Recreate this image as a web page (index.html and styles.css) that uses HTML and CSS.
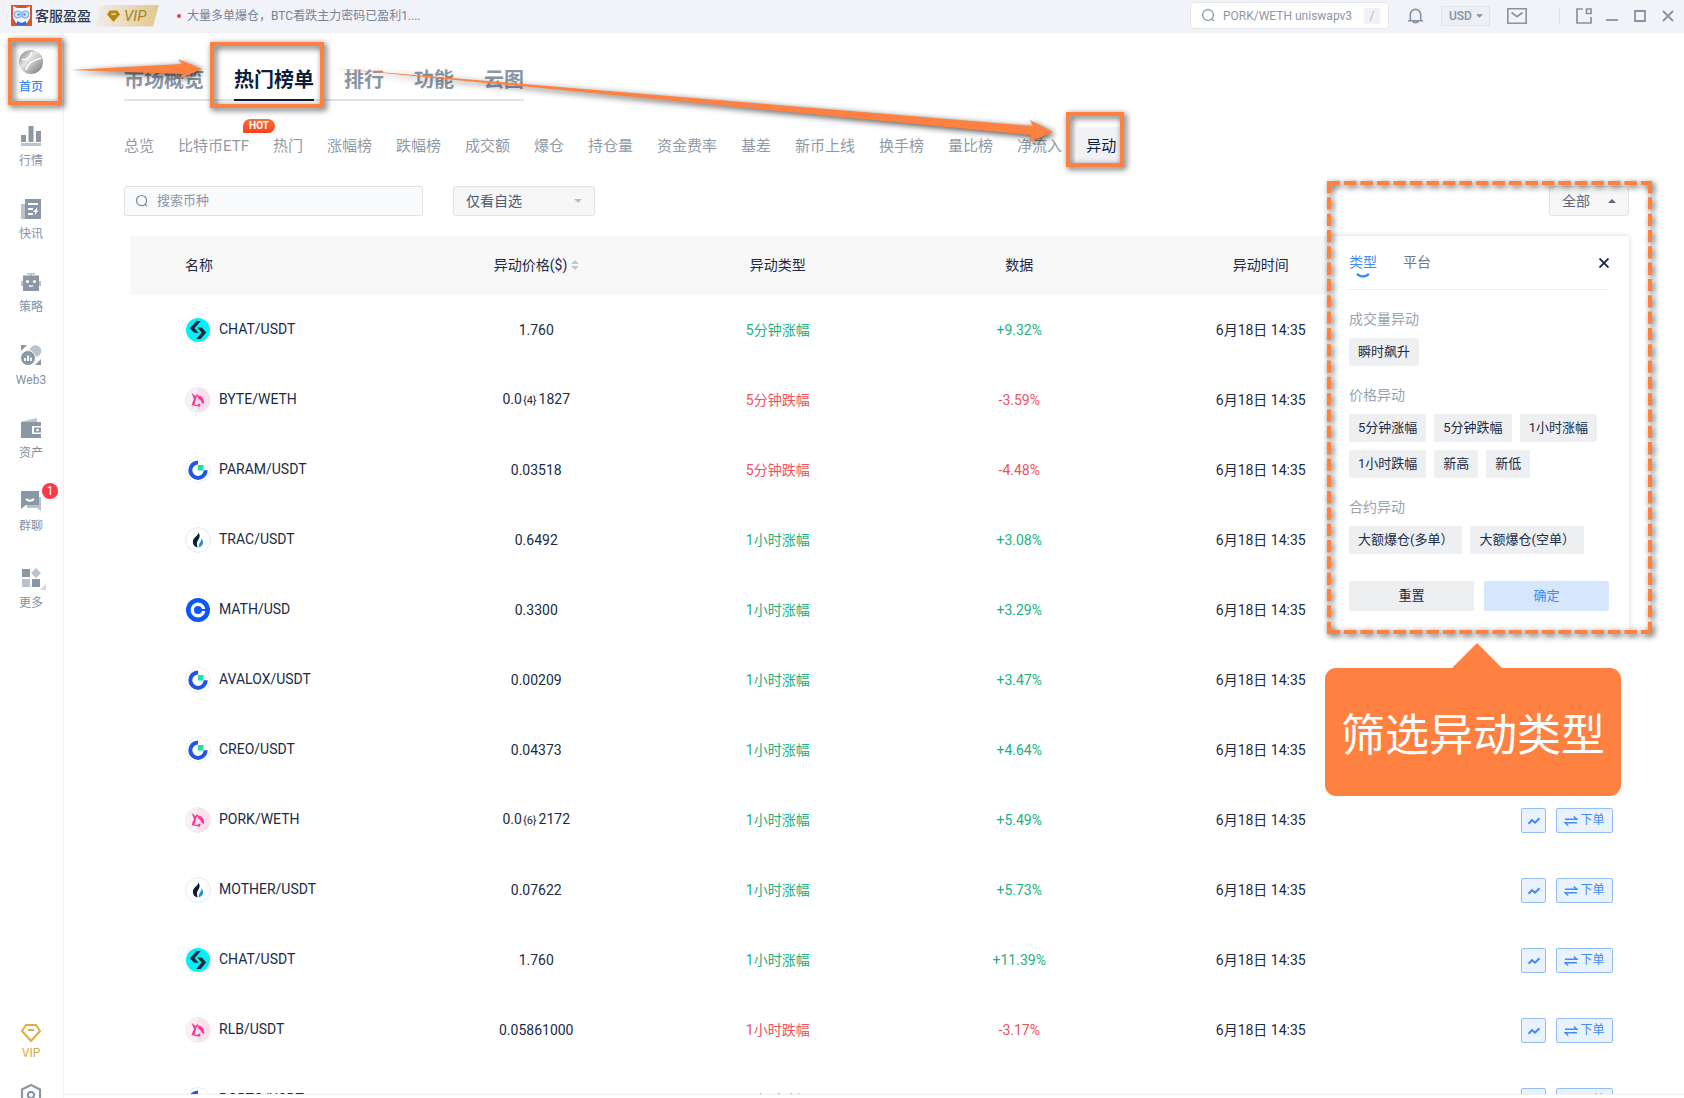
FILE: index.html
```html
<!DOCTYPE html>
<html lang="zh-CN">

<head>
	<meta charset="UTF-8" />
	<meta name="viewport" content="width=device-width, initial-scale=1.0" />
	<title>热门榜单 - 异动</title>
	<link rel="stylesheet" href="styles.css">
</head>

<body>
	<!-- shared icons -->
	<svg class="sprite" aria-hidden="true">
		<symbol id="search" viewBox="0 0 16 16">
			<circle cx="7.5" cy="7.5" r="5.8" fill="none" stroke="currentColor" stroke-width="1.3" />
			<path d="M11.2 11.6 13.8 14" stroke="currentColor" stroke-width="1.3" />
		</symbol>
		<symbol id="bitget" viewBox="0 0 26 26">
			<circle cx="13" cy="13" r="12" fill="#03f0fb" />
			<path d="M11.500 4h4.300L9.500 11.300l4.200 4.500h-4.400L4.800 11.300zM12.300 10.400h4.600L21.200 15.400 15.600 22h-4.300l5.300-6.600z" fill="#1b2a38" />
		</symbol>
		<symbol id="uni" viewBox="0 0 26 26">
			<circle cx="13" cy="13" r="12.400" fill="#fbe0ec" stroke="#ebebef" />
			<path d="M1 13a12 12 0 0 1 12-12c-3 7-4 16 0 24A12 12 0 0 1 1 13z" fill="#f7f1f6" />
			<path d="M6.500 5.800 10.500 9l2-2 1 2-2 1.200-1.300 4.300-.7 3.500-3 .7 1-3.500 1.500-3.200zM13 8.500l3.200.8 2.300 3 .8 4.700-2.600-1.200-1.200-2.600-2.300-1.700zM8.500 17.300l3.500.6 2.300-1.500 1.500 1.300-1.500 2.300-1-.8-3.800-.2z" fill="#f73a97" />
		</symbol>
		<symbol id="gate" viewBox="0 0 26 26">
			<circle cx="13" cy="13" r="12.400" fill="#fff" stroke="#ececf0" />
			<path d="M13 5.500A7.700 7.700 0 1 0 20.700 13.200" fill="none" stroke="#2454e6" stroke-width="4" />
			<path d="M13 8h5.500v5.500H13z" fill="#17e5a1" />
		</symbol>
		<symbol id="huobi" viewBox="0 0 26 26">
			<circle cx="13" cy="13" r="12.400" fill="#fff" stroke="#e8e8ec" />
			<path d="M13.500 5.500c1.800 2.600 1.400 5-.4 7.600-1.500 2.200-1.600 4.600-.3 7.200-4-.6-5.600-4-4.600-7.400.8-2.600 4.600-3.800 5.300-7.400z" fill="#0b1c3d" />
			<path d="M16.500 11.400c2.300 2.800 2.600 6.800-2.300 9-1.400-3.700 2.200-5.400 2.300-9z" fill="#1b94dd" />
		</symbol>
		<symbol id="coinbase" viewBox="0 0 26 26">
			<circle cx="13" cy="13" r="12" fill="#0a56fb" />
			<circle cx="13" cy="13" r="5.700" fill="none" stroke="#fff" stroke-width="3.400" />
			<path d="M14 12h8v2h-8z" fill="#0a56fb" />
		</symbol>
		<symbol id="trend" viewBox="0 0 14 14">
			<path d="M1.500 9.700 5 6.200 8 8.700 12.500 4.200" fill="none" stroke="currentColor" stroke-width="2" />
		</symbol>
		<symbol id="swap" viewBox="0 0 14 14">
			<path d="M1 5.300h12L9.800 2.500M13 8.700H1l3.200 2.800" fill="none" stroke="currentColor" stroke-width="1.400" />
		</symbol>
	</svg>

	<header class="topbar">
		<svg class="logo" viewBox="0 0 21 21">
			<path d="M0 0h21v21H0z" fill="#d9532f" />
			<path d="M2 1l4 2h9l4-2v12l-3 5H5l-3-5z" fill="#f4f8ff" />
			<circle cx="6.800" cy="9.500" r="3.400" fill="#d5e9ff" stroke="#7fb2ee" stroke-width="1.400" />
			<circle cx="14.200" cy="9.500" r="3.400" fill="#d5e9ff" stroke="#7fb2ee" stroke-width="1.400" />
			<circle cx="7.500" cy="9.500" r="1.200" fill="#4a8ae0" />
			<circle cx="13.500" cy="9.500" r="1.200" fill="#4a8ae0" />
			<path d="M6 16l4.500 2 4.500-2v4H6z" fill="#2f6ce0" />
		</svg>
		<span class="user">客服盈盈</span>
		<span class="vip-tag">
			<svg viewBox="0 0 14 14">
				<path d="M3 1h8l3 4.500L7 13.500 0 5.500z" fill="#b8860f" />
				<path d="M4.500 5h5" stroke="#f6e7bb" stroke-width="1.400" />
			</svg>VIP
		</span>
		<a class="news" href="#">大量多单爆仓，BTC看跌主力密码已盈利1....</a>

		<label class="top-search">
			<svg><use href="#search" /></svg>
			<input type="text" placeholder="PORK/WETH uniswapv3" aria-label="搜索">
			<kbd>/</kbd>
		</label>
		<button class="icon-btn bell" aria-label="通知">
			<svg viewBox="0 0 18 18">
				<path d="M1 14h16M3.500 13.500V7.500a5.500 5.500 0 0 1 11 0v6M6 14.500a3.200 2.500 0 0 0 6 0" fill="none" stroke="currentColor" stroke-width="1.700" />
			</svg>
		</button>
		<select class="currency" aria-label="货币">
			<option>USD</option>
			<option>CNY</option>
		</select>
		<button class="icon-btn mail" aria-label="消息">
			<svg viewBox="0 0 20 16">
				<path d="M.8.800h18.400v14.400H.8zM4.500 4.500 10 8.700l5.500-4.200" fill="none" stroke="currentColor" stroke-width="1.600" />
			</svg>
		</button>
		<div class="window-btns">
			<button class="icon-btn" aria-label="弹出">
				<svg viewBox="0 0 16 16">
					<path d="M7 1H1v14h14V9M10.500 1H15v4.500h-4.500z" fill="none" stroke="currentColor" stroke-width="1.700" />
				</svg>
			</button>
			<button class="icon-btn" aria-label="最小化">
				<svg viewBox="0 0 16 16">
					<path d="M2 12h12" stroke="currentColor" stroke-width="1.800" />
				</svg>
			</button>
			<button class="icon-btn" aria-label="最大化">
				<svg viewBox="0 0 16 16">
					<path d="M3 3h10v10H3z" fill="none" stroke="currentColor" stroke-width="1.800" />
				</svg>
			</button>
			<button class="icon-btn" aria-label="关闭">
				<svg viewBox="0 0 16 16">
					<path d="M3 3l10 10M13 3 3 13" stroke="currentColor" stroke-width="1.800" />
				</svg>
			</button>
		</div>
	</header>

	<nav class="sidebar">
		<a class="side-item home active" href="#">
			<svg viewBox="0 0 24 24">
				<defs>
					<linearGradient id="ball" x1="0" y1="0" x2="1" y2="1">
						<stop offset="0" stop-color="#777" />
						<stop offset=".4" stop-color="#e4e4e4" />
						<stop offset=".65" stop-color="#b2b2b2" />
						<stop offset="1" stop-color="#707070" />
					</linearGradient>
				</defs>
				<circle cx="12" cy="12" r="12" fill="url(#ball)" />
				<path d="M3 9c4 3 9-3 10-7M7 20C8 13 14 10 22 8" fill="none" stroke="#fff" stroke-width="1.500" />
			</svg>
			<span>首页</span>
		</a>
		<a class="side-item" href="#">
			<svg viewBox="0 0 24 24">
				<path d="M2 11h5v7H2zM9.500 2h5v16h-5zM17 7h5v11h-5z" fill="#8b97a5" />
				<path d="M2 19h20v3H2z" fill="#bac2cc" />
			</svg>
			<span>行情</span>
		</a>
		<a class="side-item" href="#">
			<svg viewBox="0 0 24 24">
				<path d="M2 7h4v15H2z" fill="#bac2cc" />
				<path d="M6 2h16v20H6z" fill="#8b97a5" />
				<path d="M9 7h10M9 12h5M9 17h5" stroke="#fff" stroke-width="2" />
				<path d="M18.500 10 14 15h2.200l-1 3.500 4.300-5h-2z" fill="#fff" />
			</svg>
			<span>快讯</span>
		</a>
		<a class="side-item" href="#">
			<svg viewBox="0 0 24 24">
				<path d="M8 3h8v1.500h-3V6h-2V4.500H8zM2 11h2v5H2zM20 11h2v5h-2z" fill="#bac2cc" />
				<path d="M4 5.500h16V21H4z" fill="#8b97a5" />
				<circle cx="8.500" cy="11.500" r="1.600" fill="#fff" />
				<circle cx="15.500" cy="11.500" r="1.600" fill="#fff" />
				<path d="M10 15.500q2 1.500 4 0" stroke="#fff" stroke-width="1.500" fill="none" />
			</svg>
			<span>策略</span>
		</a>
		<a class="side-item" href="#">
			<svg viewBox="0 0 24 24">
				<path d="M2 2h6L2 8zM22 16v6h-6z" fill="#8b97a5" />
				<circle cx="16.500" cy="8" r="5.800" fill="#bac2cc" />
				<circle cx="9" cy="15" r="7.500" fill="#8b97a5" stroke="#fff" />
				<path d="M6 15v3M9 12.500V18M12 14.500V18" stroke="#fff" stroke-width="1.800" />
			</svg>
			<span>Web3</span>
		</a>
		<a class="side-item" href="#">
			<svg viewBox="0 0 24 24">
				<path d="M3 5.500 18 2v4H3z" fill="#bac2cc" />
				<path d="M2 6h20v4h-9v8h9v4H2z" fill="#8b97a5" />
				<path d="M15 11.500h7v5h-7z" fill="#8b97a5" />
				<circle cx="18.500" cy="14" r="1.300" fill="#fff" />
			</svg>
			<span>资产</span>
		</a>
		<a class="side-item" href="#">
			<svg viewBox="0 0 24 24">
				<path d="M8 8h14v14l-4-3H8z" fill="#bac2cc" />
				<path d="M2 2h18v14H7l-5 4z" fill="#8b97a5" />
				<path d="M7 10q4 3.500 8 0" stroke="#fff" stroke-width="2" fill="none" />
			</svg>
			<span>群聊</span>
			<b class="badge">1</b>
		</a>
		<a class="side-item more" href="#">
			<svg viewBox="0 0 24 24">
				<path d="M3 3h8v8H3zM13 13h8v8h-8z" fill="#8b97a5" />
				<path d="M3 13h8v8H3zM17 2l5 5-5 5-5-5z" fill="#bac2cc" />
			</svg>
			<span>更多</span>
		</a>
		<a class="side-item side-vip" href="#">
			<svg viewBox="2 2 20 20">
				<path d="M7 4h10l4 6-9 10L3 10z" fill="none" stroke="#dfae3d" stroke-width="2" />
				<path d="M9 9h6" stroke="#dfae3d" stroke-width="2" />
			</svg>
			<span>VIP</span>
		</a>
		<a class="side-item side-set" href="#" aria-label="设置">
			<svg viewBox="0 0 24 24">
				<path d="M12 3 21 7.500V18l-9 5-9-5V7.500z" fill="none" stroke="#8b97a5" stroke-width="2.200" />
				<circle cx="12" cy="13" r="3.200" fill="none" stroke="#8b97a5" stroke-width="2.200" />
			</svg>
		</a>
	</nav>

	<main class="main">
		<nav class="tabs">
			<a href="#">市场概览</a>
			<a class="active" href="#">热门榜单</a>
			<a href="#">排行</a>
			<a href="#">功能</a>
			<a href="#">云图</a>
		</nav>

		<nav class="subtabs">
			<a href="#">总览</a>
			<a href="#">比特币ETF<i class="hot">HOT</i></a>
			<a href="#">热门</a>
			<a href="#">涨幅榜</a>
			<a href="#">跌幅榜</a>
			<a href="#">成交额</a>
			<a href="#">爆仓</a>
			<a href="#">持仓量</a>
			<a href="#">资金费率</a>
			<a href="#">基差</a>
			<a href="#">新币上线</a>
			<a href="#">换手榜</a>
			<a href="#">量比榜</a>
			<a href="#">净流入</a>
			<a class="active" href="#">异动</a>
		</nav>

		<div class="toolbar">
			<label class="coin-search">
				<svg><use href="#search" /></svg>
				<input type="text" placeholder="搜索币种" aria-label="搜索币种">
			</label>
			<select class="own" aria-label="自选">
				<option>仅看自选</option>
				<option>全部币种</option>
			</select>

			<div class="filter">
				<button class="filter-btn" aria-expanded="true">全部</button>
				<div class="panel">
					<div class="panel-head">
						<button class="active">类型
							<svg viewBox="0 0 14 6"><path d="M1 1q6 5 12 0" fill="none" stroke="#3f8cf5" stroke-width="2.400" /></svg>
						</button>
						<button>平台</button>
						<button class="close" aria-label="关闭">
							<svg viewBox="0 0 10 10"><path d="M.500.500l9 9M9.500.500l-9 9" stroke="#14243f" stroke-width="1.800" /></svg>
						</button>
					</div>
					<h4>成交量异动</h4>
					<div class="chips">
						<button>瞬时飙升</button>
					</div>
					<h4>价格异动</h4>
					<div class="chips">
						<button>5分钟涨幅</button>
						<button>5分钟跌幅</button>
						<button>1小时涨幅</button>
						<button>1小时跌幅</button>
						<button>新高</button>
						<button>新低</button>
					</div>
					<h4>合约异动</h4>
					<div class="chips">
						<button>大额爆仓(多单）</button>
						<button>大额爆仓(空单）</button>
					</div>
					<div class="panel-foot">
						<button>重置</button>
						<button class="ok">确定</button>
					</div>
				</div>
				<svg class="dashed" viewBox="0 0 325 453">
					<path d="M0 2h325M0 451h325" stroke-dasharray="12.500 4" stroke-dashoffset="-.4" />
					<path d="M2 0v453M323 0v453" stroke-dasharray="12.300 4.020" />
				</svg>
				<div class="callout">筛选异动类型</div>
			</div>
		</div>

		<table class="list">
			<thead>
				<tr>
					<th class="pad"></th>
					<th class="name">名称</th>
					<th>异动价格($)
						<svg class="sort" viewBox="0 0 8 12"><path d="M4 1l4 4H0zM4 11l4-4H0z" fill="#c3c8ce" /></svg>
					</th>
					<th>异动类型</th>
					<th>数据</th>
					<th>异动时间</th>
					<th></th>
				</tr>
			</thead>
			<tbody>
				<tr class="up">
					<td></td>
					<td class="name"><svg><use href="#bitget" /></svg>CHAT/USDT</td>
					<td>1.760</td>
					<td class="c">5分钟涨幅</td>
					<td class="c">+9.32%</td>
					<td>6月18日 14:35</td>
					<td class="act"><button class="chart" aria-label="走势"><svg><use href="#trend" /></svg></button><button class="order"><svg><use href="#swap" /></svg>下单</button></td>
				</tr>
				<tr class="down">
					<td></td>
					<td class="name"><svg><use href="#uni" /></svg>BYTE/WETH</td>
					<td>0.0<small>{4}</small>1827</td>
					<td class="c">5分钟跌幅</td>
					<td class="c">-3.59%</td>
					<td>6月18日 14:35</td>
					<td class="act"><button class="chart" aria-label="走势"><svg><use href="#trend" /></svg></button><button class="order"><svg><use href="#swap" /></svg>下单</button></td>
				</tr>
				<tr class="down">
					<td></td>
					<td class="name"><svg><use href="#gate" /></svg>PARAM/USDT</td>
					<td>0.03518</td>
					<td class="c">5分钟跌幅</td>
					<td class="c">-4.48%</td>
					<td>6月18日 14:35</td>
					<td class="act"><button class="chart" aria-label="走势"><svg><use href="#trend" /></svg></button><button class="order"><svg><use href="#swap" /></svg>下单</button></td>
				</tr>
				<tr class="up">
					<td></td>
					<td class="name"><svg><use href="#huobi" /></svg>TRAC/USDT</td>
					<td>0.6492</td>
					<td class="c">1小时涨幅</td>
					<td class="c">+3.08%</td>
					<td>6月18日 14:35</td>
					<td class="act"><button class="chart" aria-label="走势"><svg><use href="#trend" /></svg></button><button class="order"><svg><use href="#swap" /></svg>下单</button></td>
				</tr>
				<tr class="up">
					<td></td>
					<td class="name"><svg><use href="#coinbase" /></svg>MATH/USD</td>
					<td>0.3300</td>
					<td class="c">1小时涨幅</td>
					<td class="c">+3.29%</td>
					<td>6月18日 14:35</td>
					<td class="act"><button class="chart" aria-label="走势"><svg><use href="#trend" /></svg></button><button class="order"><svg><use href="#swap" /></svg>下单</button></td>
				</tr>
				<tr class="up">
					<td></td>
					<td class="name"><svg><use href="#gate" /></svg>AVALOX/USDT</td>
					<td>0.00209</td>
					<td class="c">1小时涨幅</td>
					<td class="c">+3.47%</td>
					<td>6月18日 14:35</td>
					<td class="act"><button class="chart" aria-label="走势"><svg><use href="#trend" /></svg></button><button class="order"><svg><use href="#swap" /></svg>下单</button></td>
				</tr>
				<tr class="up">
					<td></td>
					<td class="name"><svg><use href="#gate" /></svg>CREO/USDT</td>
					<td>0.04373</td>
					<td class="c">1小时涨幅</td>
					<td class="c">+4.64%</td>
					<td>6月18日 14:35</td>
					<td class="act"><button class="chart" aria-label="走势"><svg><use href="#trend" /></svg></button><button class="order"><svg><use href="#swap" /></svg>下单</button></td>
				</tr>
				<tr class="up">
					<td></td>
					<td class="name"><svg><use href="#uni" /></svg>PORK/WETH</td>
					<td>0.0<small>{6}</small>2172</td>
					<td class="c">1小时涨幅</td>
					<td class="c">+5.49%</td>
					<td>6月18日 14:35</td>
					<td class="act"><button class="chart" aria-label="走势"><svg><use href="#trend" /></svg></button><button class="order"><svg><use href="#swap" /></svg>下单</button></td>
				</tr>
				<tr class="up">
					<td></td>
					<td class="name"><svg><use href="#huobi" /></svg>MOTHER/USDT</td>
					<td>0.07622</td>
					<td class="c">1小时涨幅</td>
					<td class="c">+5.73%</td>
					<td>6月18日 14:35</td>
					<td class="act"><button class="chart" aria-label="走势"><svg><use href="#trend" /></svg></button><button class="order"><svg><use href="#swap" /></svg>下单</button></td>
				</tr>
				<tr class="up">
					<td></td>
					<td class="name"><svg><use href="#bitget" /></svg>CHAT/USDT</td>
					<td>1.760</td>
					<td class="c">1小时涨幅</td>
					<td class="c">+11.39%</td>
					<td>6月18日 14:35</td>
					<td class="act"><button class="chart" aria-label="走势"><svg><use href="#trend" /></svg></button><button class="order"><svg><use href="#swap" /></svg>下单</button></td>
				</tr>
				<tr class="down">
					<td></td>
					<td class="name"><svg><use href="#uni" /></svg>RLB/USDT</td>
					<td>0.05861000</td>
					<td class="c">1小时跌幅</td>
					<td class="c">-3.17%</td>
					<td>6月18日 14:35</td>
					<td class="act"><button class="chart" aria-label="走势"><svg><use href="#trend" /></svg></button><button class="order"><svg><use href="#swap" /></svg>下单</button></td>
				</tr>
				<tr class="down">
					<td></td>
					<td class="name"><svg><use href="#gate" /></svg>PORTO/USDT</td>
					<td>0.00500</td>
					<td class="c">1小时跌幅</td>
					<td class="c">-3.20%</td>
					<td>6月18日 14:35</td>
					<td class="act"><button class="chart" aria-label="走势"><svg><use href="#trend" /></svg></button><button class="order"><svg><use href="#swap" /></svg>下单</button></td>
				</tr>
			</tbody>
		</table>
	</main>
	<footer class="bottom"></footer>

	<!-- guide arrows between the highlighted steps -->
	<svg class="arrows" aria-hidden="true">
		<path d="M70 70 182 64 178 59 202 69 179 79 183 74z" />
		<path d="M330 68 1033 126 1030 120 1053 132 1029 142 1031 135z" />
	</svg>
</body>

</html>
```

FILE: styles.css
```css
* {
	box-sizing: border-box;
}

body {
	margin: 0;
	height: 100vh;
	display: grid;
	grid-template-columns: 64px 1fr;
	grid-template-rows: 33px 1fr 4px;
	position: relative;
	overflow: hidden;
	font: 14px/20px Roboto, "Noto Sans CJK SC", sans-serif;
	color: #1b2b45;
	background: #fff;
}

a {
	color: inherit;
	text-decoration: none;
}

button,
input,
select {
	font: inherit;
	color: inherit;
	margin: 0;
	padding: 0;
	border: 0;
	background: none;
	outline: none;
}

button {
	cursor: pointer;
}

select {
	appearance: none;
}

.sprite {
	position: absolute;
	width: 0;
	height: 0;
}

/* top bar */
.topbar {
	grid-column: 1 / 3;
	display: flex;
	align-items: center;
	padding: 0 8px 2px 11px;
	background: #f2f3f8;
	color: #8792a2;
}

.logo {
	width: 21px;
	height: 21px;
}

.user {
	margin-left: 3px;
	font-weight: 500;
	color: #2a3850;
}

.vip-tag {
	display: flex;
	align-items: center;
	gap: 4px;
	width: 64px;
	height: 22px;
	margin-left: 4px;
	padding-left: 12px;
	font-size: 15px;
	font-style: italic;
	color: #a98324;
	background: linear-gradient(90deg, #f0eee9, #e0c88e);
	clip-path: polygon(6px 0, 100% 0, 58px 100%, 0 100%);
}

.vip-tag svg {
	width: 13px;
	height: 14px;
}

.news {
	margin-left: 18px;
	font-size: 12px;
	color: #768294;
}

.news::before {
	content: "";
	display: inline-block;
	width: 4px;
	height: 4px;
	margin-right: 6px;
	border-radius: 50%;
	background: #f5364a;
	vertical-align: middle;
}

.top-search {
	display: flex;
	align-items: center;
	width: 199px;
	height: 27px;
	margin-left: auto;
	padding: 0 8px 0 10px;
	border: 1px solid #e4e7eb;
	border-radius: 4px;
	background: #fff;
}

.top-search svg {
	flex: none;
	width: 15px;
	height: 15px;
}

.top-search input {
	flex: 1;
	min-width: 0;
	margin-left: 7px;
	font-size: 12px;
}

.top-search kbd {
	width: 16px;
	height: 16px;
	font: 12px/16px Roboto, sans-serif;
	text-align: center;
	color: #b3b9c1;
	background: #f0f1f2;
	border-radius: 2px;
}

input::placeholder {
	color: #8d97a5;
	opacity: 1;
}

.icon-btn svg {
	display: block;
	width: 16px;
	height: 16px;
}

.bell {
	margin-left: 18px;
}

.bell svg {
	width: 17px;
	height: 18px;
}

.currency {
	width: 49px;
	height: 20px;
	margin-left: 17px;
	padding-left: 7px;
	font-size: 12px;
	font-weight: 500;
	line-height: 16px;
	border: 1px solid #e0e3e8;
	border-radius: 2px;
	background: #eceff3 url("data:image/svg+xml,%3Csvg xmlns='http://www.w3.org/2000/svg' viewBox='0 0 8 4'%3E%3Cpath d='M0 0h8L4 4z' fill='%238792a2'/%3E%3C/svg%3E") no-repeat right 6px center / 7px 4px;
}

.mail {
	margin-left: 17px;
}

.mail svg {
	width: 20px;
}

.window-btns {
	display: flex;
	gap: 12px;
	margin-left: 32px;
	padding-left: 16px;
	border-left: 1px solid #dfe2e7;
}

/* sidebar */
.sidebar {
	grid-row: 2 / 4;
	display: flex;
	flex-direction: column;
	align-items: center;
	min-height: 0;
	padding: 17px 1px 0 0;
	border-right: 1px solid #eff0f2;
}

.side-item {
	flex: none;
	position: relative;
	display: flex;
	flex-direction: column;
	align-items: center;
	gap: 4px;
	width: 54px;
	height: 73px;
	font-size: 12px;
	line-height: 18px;
	color: #8590a0;
}

.side-item svg {
	flex: none;
	width: 24px;
	height: 24px;
}

.side-item.active {
	color: #3f86f0;
	font-weight: 500;
}

.home {
	margin-bottom: 1px;
}

.more {
	margin-top: 4px;
}

.more::after {
	content: "";
	position: absolute;
	top: 18px;
	right: 12px;
	border: solid transparent;
	border-width: 3px;
	border-right-color: #d3d8de;
	border-bottom-color: #d3d8de;
}

.badge {
	position: absolute;
	top: -6px;
	right: 0;
	width: 16px;
	height: 16px;
	border-radius: 50%;
	font-size: 12px;
	font-weight: 400;
	line-height: 16px;
	text-align: center;
	color: #fff;
	background: #ff3848;
}

.side-vip {
	height: 59px;
	margin-top: auto;
	line-height: 12px;
	color: #dca64e;
}

.side-vip svg {
	width: 20px;
	height: 20px;
}

.side-set {
	height: 16px;
}

/* highlighted steps */
.home::after,
.tabs .active::before,
.subtabs .active::after {
	content: "";
	position: absolute;
	z-index: 3;
	border: 4px solid #ff8141;
	filter: drop-shadow(2px 2px 3px rgba(0, 0, 0, 0.7));
	pointer-events: none;
}

.home::after {
	inset: -12px -4px 18px 4px;
}

.arrows {
	position: absolute;
	top: 0;
	left: 0;
	width: 1100px;
	height: 180px;
	fill: #ff8141;
	filter: drop-shadow(2px 2px 3px rgba(0, 0, 0, 0.7));
	pointer-events: none;
	z-index: 4;
}

/* content */
.main {
	min-width: 0;
	min-height: 0;
	padding: 32px 55px 0 60px;
	overflow: hidden;
}

.bottom {
	border-top: 1px solid #f0f1f3;
}

.tabs {
	display: flex;
	gap: 30px;
	width: max-content;
	border-bottom: 2px solid #dfe3e8;
	font-size: 20px;
	font-weight: 700;
	line-height: 30px;
	color: #8b96a4;
}

.tabs a {
	position: relative;
	padding-bottom: 4px;
}

.tabs .active {
	color: #0b1d3c;
}

.tabs .active::after {
	content: "";
	position: absolute;
	left: 0;
	right: 0;
	bottom: -2px;
	height: 2px;
	background: #0b1d3c;
}

.tabs .active::before {
	inset: -23px -10px -9px -24px;
}

.subtabs {
	display: flex;
	gap: 8px;
	margin: 26px 0 0 -8px;
	font-size: 15px;
	line-height: 38px;
	color: #909aa7;
	white-space: nowrap;
}

.subtabs a {
	position: relative;
	padding: 0 8px;
}

.subtabs .active {
	color: #0b1d3c;
	background: #f1f2f6;
}

.subtabs .active::after {
	inset: -15px 0 -2px -12px;
}

.hot {
	position: absolute;
	top: -8px;
	left: 73px;
	width: 32px;
	height: 14px;
	border-radius: 7px 7px 7px 1px;
	font-size: 10px;
	font-style: normal;
	font-weight: 700;
	line-height: 14px;
	text-align: center;
	color: #fff;
	background: linear-gradient(#f4703a, #ff411c);
}

.toolbar {
	display: flex;
	gap: 30px;
	margin-top: 21px;
}

.coin-search {
	display: flex;
	align-items: center;
	width: 299px;
	height: 30px;
	padding: 0 10px;
	border: 1px solid #dfe2e7;
	border-radius: 3px;
	color: #7b8797;
	background: #f8fafc;
}

.coin-search svg {
	width: 14px;
	height: 14px;
}

.coin-search input {
	flex: 1;
	min-width: 0;
	margin-left: 8px;
	font-size: 13px;
}

.own {
	width: 142px;
	height: 30px;
	padding-left: 12px;
	border: 1px solid #dfe2e7;
	border-radius: 3px;
	color: #4c5a70;
	background: #f6f6f6 url("data:image/svg+xml,%3Csvg xmlns='http://www.w3.org/2000/svg' viewBox='0 0 8 4'%3E%3Cpath d='M0 0h8L4 4z' fill='%23b9bec5'/%3E%3C/svg%3E") no-repeat right 12px center / 8px 4px;
}

/* filter panel */
.filter {
	position: relative;
	z-index: 2;
	margin-left: auto;
}

.filter-btn {
	display: flex;
	align-items: center;
	justify-content: space-between;
	width: 80px;
	height: 30px;
	padding: 0 12px;
	border: 1px solid #dfe2e7;
	border-radius: 3px;
	color: #5b6880;
	background: #f6f6f6;
}

.filter-btn::after {
	content: "";
	border: 4px solid transparent;
	border-top: 0;
	border-bottom-color: #5b6880;
}

.panel {
	position: absolute;
	top: 50px;
	right: 0;
	width: 300px;
	padding: 0 20px 19px;
	background: #fff;
	box-shadow: 0 0 6px rgba(0, 0, 0, 0.15);
}

.panel-head {
	display: flex;
	gap: 26px;
	height: 54px;
	padding-top: 16px;
	align-items: flex-start;
	border-bottom: 1px solid #e9ebee;
	color: #6c788b;
}

.panel-head .active {
	color: #3f8cf5;
}

.panel-head .active svg {
	display: block;
	width: 14px;
	height: 6px;
	margin: 1px auto 0;
}

.close {
	margin-left: auto;
	padding-top: 6px;
}

.close svg {
	display: block;
	width: 10px;
	height: 10px;
}

.panel h4 {
	margin: 19px 0 9px;
	font-size: 14px;
	font-weight: 400;
	color: #9aa3b0;
}

.chips {
	display: flex;
	flex-wrap: wrap;
	gap: 8px;
	font-size: 13px;
}

.chips button {
	height: 28px;
	padding: 0 9px;
	border-radius: 2px;
	background: #eeeff1;
}

.panel-foot {
	display: flex;
	gap: 10px;
	margin-top: 27px;
	font-size: 13px;
}

.panel-foot button {
	flex: 1;
	height: 30px;
	border-radius: 2px;
	background: #eceef0;
}

.panel-foot .ok {
	color: #3f8cf5;
	background: #d6e6fc;
}

.dashed {
	position: absolute;
	top: -5px;
	right: -23px;
	width: 325px;
	height: 453px;
	overflow: visible;
	fill: none;
	stroke: #ff8141;
	stroke-width: 4;
	filter: drop-shadow(2px 2px 3px rgba(0, 0, 0, 0.7));
	pointer-events: none;
}

.callout {
	position: absolute;
	top: 482px;
	right: 8px;
	width: 296px;
	padding-top: 8px;
	border-radius: 11px;
	font-size: 44px;
	line-height: 120px;
	text-align: center;
	white-space: nowrap;
	color: #fff;
	background: #ff8141;
}

.callout::before {
	content: "";
	position: absolute;
	top: -25px;
	left: 126px;
	border: 26px solid transparent;
	border-top: 0;
	border-bottom-color: #ff8141;
}

/* list */
.list {
	width: calc(100% - 12px);
	margin: 20px 6px 0;
	border-collapse: collapse;
	table-layout: fixed;
	text-align: center;
	white-space: nowrap;
}

.list th {
	height: 59px;
	padding: 0 0 2px;
	font-weight: 400;
	background: #f8f8f8;
}

.list td {
	height: 70px;
	padding: 0;
}

.list .pad {
	width: 44px;
}

.list .name {
	padding-left: 11px;
	text-align: left;
}

.name svg {
	width: 26px;
	height: 26px;
	margin-right: 8px;
	vertical-align: middle;
}

.sort {
	width: 8px;
	height: 12px;
	vertical-align: -1px;
}

.list small {
	margin: 0 2px 0 1px;
	font-size: 11px;
}

.up .c {
	color: #22b07d;
}

.down .c {
	color: #ee5160;
}

.list .act {
	padding-right: 10px;
	text-align: right;
}

.act button {
	height: 25px;
	border: 1px solid #93bdf6;
	border-radius: 2px;
	color: #3f8cf5;
	background: #eaf2fd;
	vertical-align: middle;
}

.act svg {
	width: 14px;
	height: 14px;
	vertical-align: middle;
}

.act .chart {
	width: 25px;
	line-height: 20px;
	margin-right: 10px;
}

.act .order {
	width: 57px;
	font-size: 12px;
}

.order svg {
	margin-right: 2px;
}
```
